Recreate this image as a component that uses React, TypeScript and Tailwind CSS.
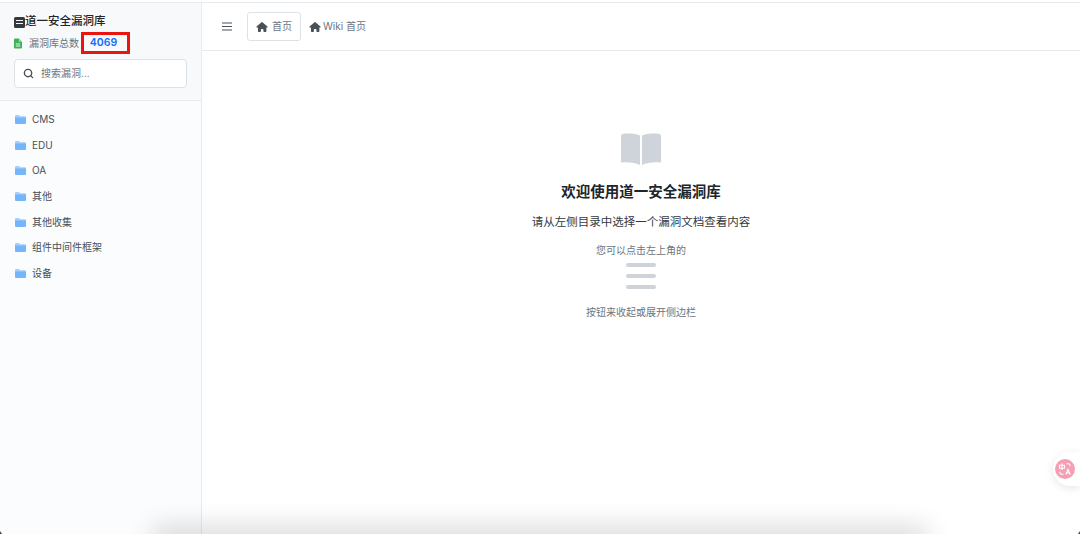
import { Search } from "lucide-react";

const font = { cjk: "font-['Inter','Noto_Sans_CJK_SC',sans-serif]" };

const folders = ["CMS", "EDU", "OA", "其他", "其他收集", "组件中间件框架", "设备"];

function FolderIcon() {
  return (
    <svg viewBox="0 0 11 9" className="w-[11px] h-[9px] shrink-0">
      <path d="M1 0h3l1 1.200h5a1 1 0 0 1 1 1V2.500H0V1a1 1 0 0 1 1-1z" className="fill-[#a5d0fd]" />
      <path d="M0 2.200h11V8a1 1 0 0 1-1 1H1a1 1 0 0 1-1-1z" className="fill-[#74b5fb]" />
    </svg>
  );
}

function HomeIcon() {
  return (
    <svg viewBox="0 0 576 512" className="w-[12px] h-[10px] fill-[#495057] shrink-0">
      <path d="M575.800 255.500c0 18-15 32.100-32 32.100h-32l.7 160.200c0 2.700-.2 5.400-.5 8.100V472c0 22.100-17.900 40-40 40h-72c-22.100 0-40-17.900-40-40v-88c0-17.700-14.300-32-32-32h-64c-17.700 0-32 14.300-32 32v88c0 22.100-17.900 40-40 40h-72c-22.100 0-40-17.900-40-40V287.600H32c-18 0-32-14-32-32.100 0-9 3-17 10-24L266.400 8c7-7 15-8 22-8s15 2 21 7l255.400 224.500c8 7 12 15 11 24z" />
    </svg>
  );
}

function FileIcon() {
  return (
    <svg viewBox="0 0 9 11" className="w-[8px] h-[11px] shrink-0">
      <path d="M1 0h4.500L9 3.500V10a1 1 0 0 1-1 1H1a1 1 0 0 1-1-1V1a1 1 0 0 1 1-1z" className="fill-[#3fb15b]" />
      <path d="M5.500 0v3.500H9z" className="fill-[#9fd8ad]" />
      <path d="M2 6h5M2 8.300h5" className="stroke-white" strokeWidth="1" />
    </svg>
  );
}

function BookIcon() {
  return (
    <svg viewBox="0 0 40 32" className="w-[40px] h-[32px] fill-[#ced4da]">
      <path d="M0 3C0 1.800 1 1 2.500 .8 8 .2 14 .4 19 2.500V32C14 29.500 7 28.800 0 29.500V3z" />
      <path d="M40 3C40 1.800 39 1 37.500 .8 32 .2 26 .4 21 2.500V32c5-2.500 12-3.200 19-2.500V3z" />
    </svg>
  );
}

function TranslateBadge() {
  return (
    <div className="absolute right-0 top-[452px] w-[27px] h-[34px] rounded-l-full bg-white shadow-[0_2px_8px_rgba(0,0,0,0.1)] flex items-center pl-[2px]">
      <div className="w-[20px] h-[20px] rounded-full bg-[#f59fb4] flex items-center justify-center">
        <svg viewBox="0 0 20 20" className="w-[20px] h-[20px] stroke-white fill-none" strokeWidth="1.100">
          <path d="M4.500 6.200h5v3h-5zM7 4.500v6.500" />
          <path d="M11.500 4.800h2a1.500 1.500 0 0 1 1.500 1.500v1" />
          <path d="M8.500 15.200h-2A1.500 1.500 0 0 1 5 13.700v-1" />
          <path d="M10.800 15.500l2.200-5.200 2.200 5.200M11.500 14h3" />
        </svg>
      </div>
    </div>
  );
}

export default function App() {
  return (
    <div className={`relative w-[1080px] h-[534px] overflow-hidden bg-white ${font.cjk}`}>
      <div className="flex flex-col h-full pt-[2px]">
        <div className="h-px bg-[#e9ecef] shrink-0" />
        <div className="flex flex-1 min-h-0">
          <aside className="w-[202px] shrink-0 flex flex-col bg-[#fbfcfd] border-r border-[#e9ecef]">
            <div className="h-[98px] shrink-0 bg-[#f8f9fa] border-b border-[#e9ecef] pl-[14px] pr-[14px] pt-[11px]">
              <div className="flex items-center h-[16px] text-[11.500px] font-medium text-[#212529]">
                <span className="w-[11px] h-[11px] bg-[#343a40] rounded-[1.500px] flex flex-col justify-center gap-[2px] px-[2px] shrink-0">
                  <span className="h-px bg-[#f8f9fa]" />
                  <span className="h-px bg-[#f8f9fa]" />
                </span>
                <span>道一安全漏洞库</span>
              </div>
              <div className="flex items-center h-[22px] mt-[2px] text-[10px] text-[#6c757d]">
                <FileIcon />
                <span className="ml-[7px] w-[52px] whitespace-nowrap">漏洞库总数</span>
                <span className="w-[49px] h-[22px] border-[3px] border-[#e8160f] flex items-center justify-center pr-[4px] text-[10.500px] font-semibold text-[#0d6efd]">
                  4069
                </span>
              </div>
              <div className="mt-[5px] w-[173px] h-[29px] bg-white border border-[#dee2e6] rounded-[4px] flex items-center pl-[8px]">
                <Search className="w-[11px] h-[11px] text-[#495057]" strokeWidth={3} />
                <span className="ml-[7px] text-[10px] text-[#6c757d]">搜索漏洞...</span>
              </div>
            </div>
            <nav className="pt-[5.500px] pl-[15px]">
              {folders.map((name) => (
                <div key={name} className="h-[25.700px] flex items-center text-[10px] text-[#495057]">
                  <FolderIcon />
                  <span className="ml-[6px]">{name}</span>
                </div>
              ))}
            </nav>
          </aside>
          <main className="flex-1 min-w-0 flex flex-col">
            <header className="h-[48px] shrink-0 border-b border-[#e9ecef] flex items-center pl-[20px]">
              <svg viewBox="0 0 10 9" className="w-[10px] h-[9px] stroke-[#495057]" strokeWidth="1.100">
                <path d="M0 1h10M0 4.500h10M0 8h10" />
              </svg>
              <div className="ml-[15px] w-[54px] h-[29px] border border-[#dee2e6] rounded-[3px] flex items-center justify-center gap-[4px] text-[10px] text-[#6c757d]">
                <HomeIcon />
                <span>首页</span>
              </div>
              <div className="ml-[8px] flex items-center gap-[2px] text-[10px] text-[#6c757d]">
                <HomeIcon />
                <span>Wiki 首页</span>
              </div>
            </header>
            <section className="flex-1 flex flex-col items-center pt-[82px]">
              <BookIcon />
              <h2 className="mt-[17px] text-[14.500px] leading-[20px] font-semibold text-[#212529]">欢迎使用道一安全漏洞库</h2>
              <p className="mt-[12px] text-[11.500px] leading-[16px] text-[#343a40]">请从左侧目录中选择一个漏洞文档查看内容</p>
              <p className="mt-[13px] text-[10px] leading-[14px] text-[#6c757d]">您可以点击左上角的</p>
              <div className="mt-[6px] flex flex-col gap-[7px]">
                <span className="w-[30px] h-[4px] rounded-full bg-[#ced4da]" />
                <span className="w-[30px] h-[4px] rounded-full bg-[#ced4da]" />
                <span className="w-[30px] h-[4px] rounded-full bg-[#ced4da]" />
              </div>
              <p className="mt-[16px] text-[10px] leading-[14px] text-[#6c757d]">按钮来收起或展开侧边栏</p>
            </section>
          </main>
        </div>
      </div>
      <TranslateBadge />
      <div className="absolute left-[160px] right-[160px] -bottom-[8px] h-[8px] shadow-[0_0_26px_7px_rgba(0,0,0,0.16)]" />
      <div className="absolute left-0 bottom-0 w-[2px] h-[3px] bg-[#3a4a3a] [clip-path:polygon(0_0,100%_100%,0_100%)]" />
      <div className="absolute right-0 bottom-0 w-[2px] h-[3px] bg-[#4a4a4a] [clip-path:polygon(100%_0,100%_100%,0_100%)]" />
    </div>
  );
}
